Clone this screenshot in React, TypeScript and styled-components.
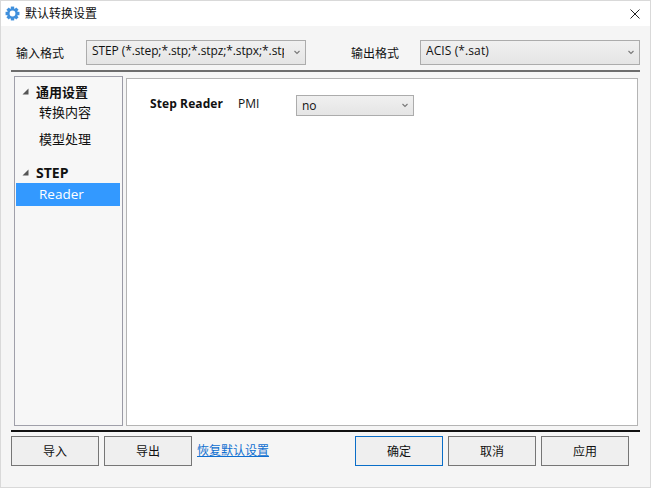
import React from "react";
import styled, { createGlobalStyle } from "styled-components";

const Global = createGlobalStyle`
  html, body { margin: 0; padding: 0; background: #f5f5f5; }
  * { box-sizing: border-box; }
`;

const fontStack = `"Open Sans", "Noto Sans CJK SC", sans-serif`;

const Window = styled.div`
  width: 651px;
  height: 488px;
  border: 1px solid #d9d9d9;
  background: #f5f5f5;
  display: flex;
  flex-direction: column;
  font-family: ${fontStack};
  font-size: 13px;
  color: #111;
  overflow: hidden;
`;

const TitleBar = styled.div`
  height: 25px;
  background: #fff;
  display: flex;
  align-items: center;
  padding-left: 4px;
  padding-right: 10px;
  flex: none;
`;

const TitleText = styled.span`
  margin-left: 5px;
  font-size: 12px;
  line-height: 25px;
  flex: 1;
  color: #111;
`;

const Content = styled.div`
  flex: 1;
  display: flex;
  flex-direction: column;
  padding: 14px 10px 0 10px;
`;

const FormatRow = styled.div`
  height: 25px;
  display: flex;
  align-items: center;
  flex: none;
`;

const FormatLabel = styled.span<{ $ml: number; $w: number }>`
  margin-left: ${(p) => p.$ml}px;
  width: ${(p) => p.$w}px;
  font-size: 12px;
  line-height: 16px;
  padding-top: 2px;
  flex: none;
`;

const Combo = styled.div<{ $w: number; $h: number }>`
  width: ${(p) => p.$w}px;
  height: ${(p) => p.$h}px;
  flex: none;
  border: 1px solid #acacac;
  background: linear-gradient(#f0f0f0, #e5e5e5);
  display: flex;
  align-items: center;
  padding-left: 5px;
  padding-right: 5px;
  font-size: 12px;
`;

const ComboText = styled.span<{ $dy: number; $ls?: number }>`
  flex: 1;
  min-width: 0;
  overflow: hidden;
  white-space: nowrap;
  position: relative;
  top: ${(p) => p.$dy}px;
  letter-spacing: ${(p) => p.$ls ?? 0}px;
`;

const ComboArrow = styled.svg`
  width: 6px;
  height: 5px;
  flex: none;
  margin-left: 10px;
`;

const Divider = styled.div<{ $color: string; $mt: number; $w: number }>`
  height: 2px;
  width: ${(p) => p.$w}px;
  margin-top: ${(p) => p.$mt}px;
  background: ${(p) => p.$color};
  flex: none;
`;

const Panels = styled.div`
  flex: none;
  height: 356px;
  display: flex;
  padding-left: 3px;
  padding-top: 4px;
`;

const TreePanel = styled.div`
  width: 109px;
  height: 350px;
  border: 1px solid #a0a0aa;
  border-right-color: #9a9aa5;
  background: #f7f7f7;
  padding-top: 3px;
  flex: none;
`;

const TreeGroup = styled.div<{ $fs?: number }>`
  height: 22px;
  display: flex;
  align-items: center;
  padding-left: 7px;
  font-weight: 700;
  font-size: ${(p) => p.$fs ?? 13}px;
  color: #111;
`;

const TreeArrow = styled.svg`
  width: 7px;
  height: 7px;
  flex: none;
  margin-right: 7px;
`;

const TreeItem = styled.div<{ $active?: boolean; $mb?: number; $mt?: number }>`
  height: 23px;
  display: flex;
  align-items: center;
  padding-left: 23px;
  padding-bottom: ${(p) => (p.$active ? 2 : 0)}px;
  font-size: ${(p) => (p.$active ? 13.5 : 13)}px;
  margin-left: 1px;
  margin-right: 2px;
  margin-top: ${(p) => p.$mt ?? 0}px;
  margin-bottom: ${(p) => p.$mb ?? 0}px;
  background: ${(p) => (p.$active ? "#3399ff" : "transparent")};
  color: ${(p) => (p.$active ? "#fff" : "#111")};
`;

const MainPanel = styled.div`
  width: 512px;
  height: 348px;
  margin-left: 3px;
  margin-top: 2px;
  background: #fff;
  border: 1px solid #b4b4b4;
  padding: 16px 0 0 23px;
  flex: none;
`;

const SettingRow = styled.div`
  display: flex;
  align-items: flex-start;
`;

const SettingGroup = styled.span`
  font-weight: 700;
  font-size: 12px;
  line-height: 18px;
  width: 88px;
  letter-spacing: 0.1px;
  flex: none;
`;

const SettingName = styled.span`
  font-size: 12px;
  line-height: 18px;
  width: 58px;
  flex: none;
`;

const FooterRow = styled.div`
  display: flex;
  align-items: flex-start;
  margin-top: 4px;
`;

const Button = styled.div<{ $primary?: boolean; $ml: number }>`
  width: 88px;
  height: 30px;
  flex: none;
  margin-left: ${(p) => p.$ml}px;
  border: 1px solid ${(p) => (p.$primary ? "#0a6ec8" : "#767676")};
  background: #efefef;
  display: flex;
  align-items: center;
  justify-content: center;
  font-size: 12px;
  color: #111;
`;

const ResetLink = styled.a`
  width: 78px;
  margin-left: 5px;
  flex: none;
  font-size: 12px;
  line-height: 17px;
  margin-top: 6px;
  color: #0f6fd0;
  text-decoration: underline;
  white-space: nowrap;
`;

const Chevron = () => (
  <ComboArrow viewBox="0 0 6 5">
    <path d="M0.5 1 L3 3.5 L5.5 1" fill="none" stroke="#777" strokeWidth="1.1" />
  </ComboArrow>
);

const Triangle = () => (
  <TreeArrow viewBox="0 0 7 7">
    <path d="M6.5 0.5 L6.5 6.5 L0.5 6.5 Z" fill="#555" />
  </TreeArrow>
);

const GearIcon = () => {
  const teeth = [0, 45, 90, 135, 180, 225, 270, 315];
  return (
    <svg width="15" height="15" viewBox="0 0 16 16" style={{ flex: "none" }}>
      {teeth.map((a) => (
        <rect key={a} x="6.2" y="0.6" width="3.6" height="3.4" fill="#3f8fdc" transform={`rotate(${a} 8 8)`} />
      ))}
      <circle cx="8" cy="8" r="4.4" fill="none" stroke="#3f8fdc" strokeWidth="2.6" />
    </svg>
  );
};

const CloseIcon = () => (
  <svg width="10" height="10" viewBox="0 0 10 10" style={{ flex: "none" }}>
    <path d="M0.5 0.5 L9.5 9.5 M9.5 0.5 L0.5 9.5" stroke="#222" strokeWidth="1" fill="none" />
  </svg>
);

export default function App() {
  return (
    <>
      <Global />
      <Window>
        <TitleBar>
          <GearIcon />
          <TitleText>默认转换设置</TitleText>
          <CloseIcon />
        </TitleBar>
        <Content>
          <FormatRow>
            <FormatLabel $ml={5} $w={70}>输入格式</FormatLabel>
            <Combo $w={220} $h={25}>
              <ComboText $dy={-2} $ls={-0.1}>STEP (*.step;*.stp;*.stpz;*.stpx;*.stp</ComboText>
              <Chevron />
            </Combo>
            <FormatLabel $ml={45} $w={69}>输出格式</FormatLabel>
            <Combo $w={220} $h={25}>
              <ComboText $dy={-2} $ls={0.1}>ACIS (*.sat)</ComboText>
              <Chevron />
            </Combo>
          </FormatRow>
          <Divider $color="#6d6d6d" $mt={5} $w={629} />
          <Panels>
            <TreePanel>
              <TreeGroup><Triangle />通用设置</TreeGroup>
              <TreeItem $mt={-2} $mb={4}>转换内容</TreeItem>
              <TreeItem $mb={11}>模型处理</TreeItem>
              <TreeGroup $fs={14}><Triangle />STEP</TreeGroup>
              <TreeItem $active>Reader</TreeItem>
            </TreePanel>
            <MainPanel>
              <SettingRow>
                <SettingGroup>Step Reader</SettingGroup>
                <SettingName>PMI</SettingName>
                <Combo $w={118} $h={21}>
                  <ComboText $dy={0}>no</ComboText>
                  <Chevron />
                </Combo>
              </SettingRow>
            </MainPanel>
          </Panels>
          <Divider $color="#111" $mt={2} $w={629} />
          <FooterRow>
            <Button $ml={0}>导入</Button>
            <Button $ml={5}>导出</Button>
            <ResetLink>恢复默认设置</ResetLink>
            <Button $ml={80} $primary>确定</Button>
            <Button $ml={5}>取消</Button>
            <Button $ml={5}>应用</Button>
          </FooterRow>
        </Content>
      </Window>
    </>
  );
}
